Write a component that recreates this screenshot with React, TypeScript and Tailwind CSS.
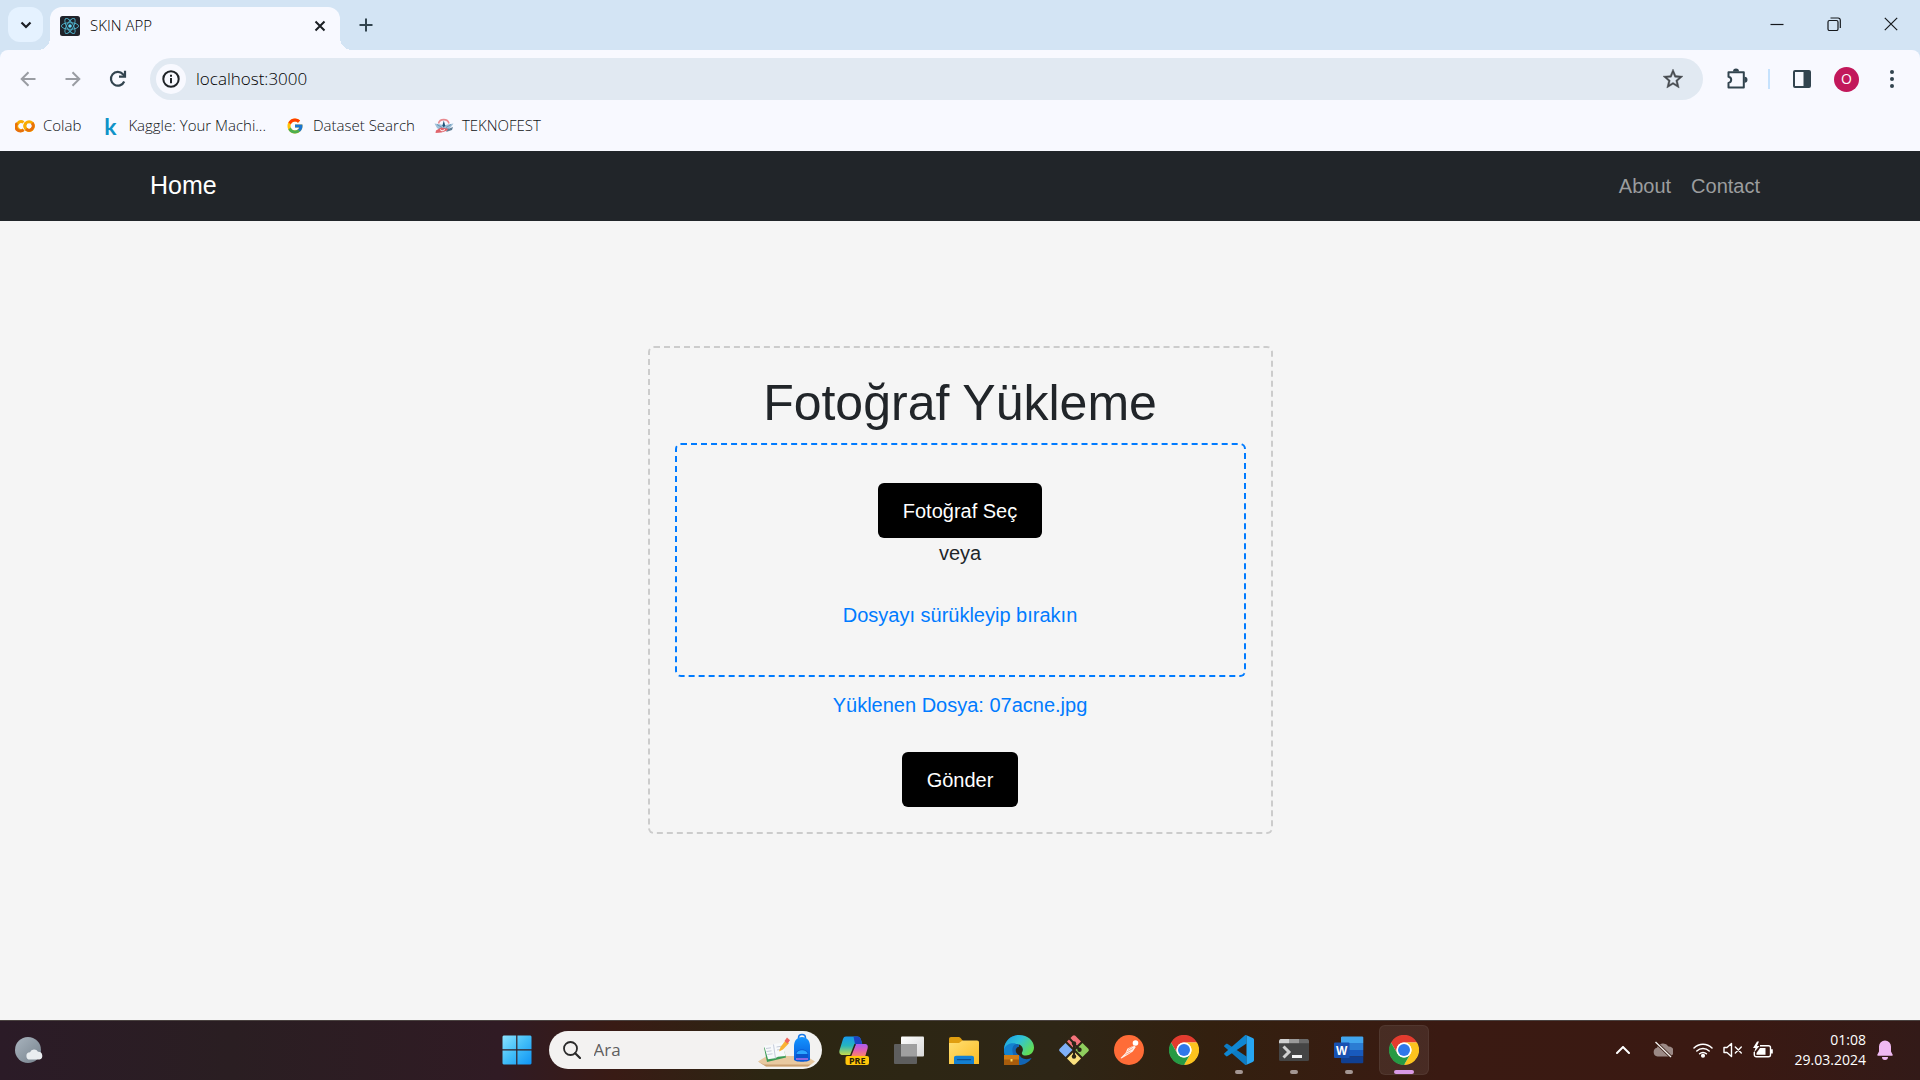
import { useRef, useState } from "react";
import type { ReactNode } from "react";
import { FcGoogle } from "react-icons/fc";

/* ---------- browser icons ---------- */

function ReactLogo() {
  return (
    <svg viewBox="0 0 20 20" className="size-5 shrink-0">
      <rect width="20" height="20" rx="2.5" fill="#20232a" />
      <g fill="none" stroke="#4fb3cc" strokeWidth="0.9">
        <ellipse cx="10" cy="10" rx="8.6" ry="3.3" />
        <ellipse cx="10" cy="10" rx="8.6" ry="3.3" transform="rotate(60 10 10)" />
        <ellipse cx="10" cy="10" rx="8.6" ry="3.3" transform="rotate(120 10 10)" />
      </g>
      <circle cx="10" cy="10" r="1.8" fill="#61dafb" />
    </svg>
  );
}

function ColabLogo() {
  return (
    <svg viewBox="0 0 20 20" className="size-5" fill="none" strokeWidth="2.9">
      <path d="M8.6 6.4A4.4 4.4 0 1 0 8.6 13.8" stroke="#f9ab00" />
      <path d="M2.2 7.2A4.4 4.4 0 0 0 8.6 13.8" stroke="#e8710a" />
      <circle cx="14.1" cy="10.1" r="4.4" stroke="#f9ab00" />
      <path d="M11 7A4.4 4.4 0 0 0 17.2 13.2" stroke="#f9ab00" />
      <path d="M11 13.2A4.4 4.4 0 0 0 17.2 7" stroke="#e8710a" />
    </svg>
  );
}

function KaggleLogo() {
  return <span className="font-['Lato',sans-serif] text-[23px]/[28px] font-bold text-[#0f93c8]">k</span>;
}

function TeknofestLogo() {
  return (
    <svg viewBox="0 0 20 20" className="size-5">
      <path d="M4.500 7.500a5.400 5 0 0 1 10.500 0" fill="none" stroke="#e88a90" strokeWidth="1.600" />
      <path d="M.5 7.500l6.500 1 3 1 3.500-1 6-1-3 4-5 3.500-5-.5-3.500-2.500z" fill="#9fc0d8" />
      <path d="M3 8.500l5 3M17 8.500l-5 3M5 13l10 0" stroke="#6b97b8" strokeWidth="1" />
      <path d="M9.800 4.500l1.400 5-1.400 2-1.400-2z" fill="#1f5278" />
      <path d="M2 14.500l5-3 6 1 3.500 1-9 3-6 .5z" fill="#e0646c" />
      <path d="M6 13.500l2 1.500 3-1.500" fill="none" stroke="#fff" strokeWidth="1" />
      <path d="M14 13l5-2-1 3-6 2z" fill="#5d7c93" />
    </svg>
  );
}

function ArrowIcon({ flip = false }: { flip?: boolean }) {
  return (
    <svg viewBox="0 0 16 16" className={flip ? "size-4 rotate-180" : "size-4"} fill="none" stroke="#9a9da3" strokeWidth="2">
      <path d="M15.500 8H2M8.500 1.200 1.700 8l6.800 6.800" />
    </svg>
  );
}

function ReloadIcon() {
  return (
    <svg viewBox="0 0 18 18" className="size-[18px]" fill="none" stroke="#32444f" strokeWidth="2.200">
      <path d="M15.200 11.500A6.900 6.900 0 1 1 14 4.200l2 2.100" />
      <path d="M16 .8v5.900h-6" />
    </svg>
  );
}

function InfoIcon() {
  return (
    <svg viewBox="0 0 18 18" className="size-[18px]" fill="none" stroke="#1f2328" strokeWidth="2">
      <circle cx="9" cy="9" r="7.700" />
      <path d="M9 8v5.200M9 4.700v2" />
    </svg>
  );
}

function StarIcon() {
  return (
    <svg viewBox="0 0 24 24" className="size-6" fill="#474b50" stroke="#474b50" strokeWidth=".4">
      <path d="m22 9.240-7.190-.62L12 2 9.190 8.630 2 9.240l5.460 4.730L5.820 21 12 17.270 18.180 21l-1.630-7.030L22 9.240zM12 15.400l-3.760 2.270 1-4.280-3.320-2.880 4.380-.38L12 6.100l1.710 4.040 4.380.38-3.320 2.880 1 4.280L12 15.400z" />
    </svg>
  );
}

function PuzzleIcon() {
  return (
    <svg viewBox="0 0 22 22" className="size-[22px]">
      <path d="M2.500 4.200h15.300v15.300H2.500v-4.600c3.600-.6 3.600-5.500 0-6.200z" fill="none" stroke="#32444f" strokeWidth="2" strokeLinejoin="round" />
      <path d="M7 3.500a3 3 0 0 1 6 0zM18.500 8.800a3 3 0 0 1 0 6z" fill="#32444f" />
    </svg>
  );
}

function PanelIcon() {
  return (
    <svg viewBox="0 0 20 20" className="size-5">
      <rect x="2" y="2" width="16" height="16" rx="1" fill="none" stroke="#32444f" strokeWidth="2" />
      <path d="M11.500 2H18v16h-6.500z" fill="#32444f" />
    </svg>
  );
}

/* ---------- taskbar icons ---------- */

function WindowsLogo() {
  return (
    <svg viewBox="0 0 30 30" className="size-[30px]">
      <defs>
        <linearGradient id="win" x1="0" y1="0" x2="1" y2="1">
          <stop offset="0" stopColor="#8be3ff" />
          <stop offset=".5" stopColor="#41bdf8" />
          <stop offset="1" stopColor="#0f94f5" />
        </linearGradient>
      </defs>
      <path d="M1.500.5h12.700v13.700H.5V1.500zM15.400.5h13.100l1 1v12.700H15.400zM.5 15.500h13.700v14H1.500l-1-1zM15.400 15.500h14.100v13l-1 1H15.400z" fill="url(#win)" />
    </svg>
  );
}

function SchoolArt() {
  return (
    <svg viewBox="0 0 58 34" className="h-[34px] w-[58px]">
      <defs>
        <linearGradient id="bag" x1="0" y1="0" x2="0" y2="1">
          <stop offset="0" stopColor="#1394ff" />
          <stop offset="1" stopColor="#0758d8" />
        </linearGradient>
      </defs>
      <path d="M0 28.500 9 23h39l9 5.500-7 5-42 0z" fill="#e8c9a0" />
      <path d="M0 28.500l8 5h42l7-5-4 3H6z" fill="#c99f70" />
      <path d="M6 14.500 24 11l4 13.500-19 4.500z" fill="#3b9b55" />
      <path d="M6 12.500l8-.5 3-1.200 8-1.300 2.300 13.500-7.300.7-3 1.500-7 1z" fill="#f7f9fb" />
      <path d="M15.500 11.500l2 14M8 15.500l5-.7M8.500 18.500l5-.7M9.500 21.500l5-.7M18.500 14l5-.8M19 17l5-.8" stroke="#b8bfd0" strokeWidth=".8" />
      <path d="M21 18.500l1.500-4.500L27.500 7.500l3.500 2.800-6 6.200z" fill="#f9b233" />
      <path d="M26.500 8 29 4.500l3 2.800-2.500 3.500z" fill="#f0645a" />
      <path d="M40.500 5c0-4.600 7-4.600 7 0" fill="none" stroke="#1879e8" strokeWidth="1.500" />
      <path d="M36 13c0-12 16-12 16 0v13.500c0 3-16 3-16 0z" fill="url(#bag)" />
      <path d="M38 21c0-6 12-6 12 0v4c0 2-12 2-12 0z" fill="#0a55cd" />
      <path d="M38.500 21c0-5 11-5 11 0z" fill="#2ca7ff" />
      <path d="M38 26h12" stroke="#b56fea" strokeWidth="1.500" />
    </svg>
  );
}

function CopilotIcon() {
  return (
    <svg viewBox="0 0 30 30" className="size-[30px] overflow-visible">
      <defs>
        <linearGradient id="cpa" x1="0" y1="0" x2="0" y2="1">
          <stop offset="0" stopColor="#1799ee" />
          <stop offset=".5" stopColor="#26b5bd" />
          <stop offset="1" stopColor="#c7dc4b" />
        </linearGradient>
        <linearGradient id="cpb" x1="0" y1="0" x2="0" y2="1">
          <stop offset="0" stopColor="#a85cf4" />
          <stop offset=".5" stopColor="#e35fae" />
          <stop offset="1" stopColor="#ff8a5c" />
        </linearGradient>
      </defs>
      <path d="M7 1.500h11c2.500 0 3.500 1.500 4.200 4l1 3.500h-6L12 20H4C1 20-.2 18 .6 15L4 4C4.600 2.300 5.500 1.500 7 1.500z" fill="url(#cpa)" />
      <path d="M14.500 1.500H18c2.500 0 3.500 1.500 4.200 4l1 3.500H16z" fill="#1d43c4" />
      <path d="M17 9h8.500c3 0 3.800 2 3 4.800L26 22H11z" fill="url(#cpb)" />
      <path d="M16.200 9 11.500 21" stroke="#2b2417" strokeWidth="1.500" />
      <rect x="6.500" y="21" width="23.500" height="9" rx="2" fill="#ffc60a" />
      <text x="18.300" y="28.700" textAnchor="middle" fontFamily="Noto Sans, sans-serif" fontWeight="700" fontSize="9" fill="#2b2106">PRE</text>
    </svg>
  );
}

function TaskViewIcon() {
  return (
    <svg viewBox="0 0 30 30" className="size-[30px]">
      <defs>
        <linearGradient id="tv" x1="0" y1="0" x2="1" y2="1">
          <stop offset="0" stopColor="#fff" />
          <stop offset="1" stopColor="#d8d8d8" />
        </linearGradient>
      </defs>
      <rect x="7" y="1.500" width="23" height="20" rx="1" fill="url(#tv)" />
      <rect x="0" y="9" width="23" height="20" rx="1" fill="#5e5e5e" />
      <path d="M7 9h16v12.500H7z" fill="#a0a0a0" />
    </svg>
  );
}

function FolderIcon() {
  return (
    <svg viewBox="0 0 30 30" className="size-[30px]">
      <defs>
        <linearGradient id="fo" x1="0" y1="0" x2="1" y2="1">
          <stop offset="0" stopColor="#ffdf73" />
          <stop offset="1" stopColor="#fbbc24" />
        </linearGradient>
      </defs>
      <path d="M0 4c0-1.200.7-2 2-2h7.500c1 0 1.600.5 2.500 1.500L14 6v5H0z" fill="#e09e10" />
      <path d="M0 8h10l3.500-2.500H28c1.400 0 2 .7 2 2V29H0z" fill="url(#fo)" />
      <path d="M5 29v-6c0-1.500.8-2.300 2.300-2.300h15.400c1.500 0 2.300.8 2.300 2.300v6z" fill="#1380d3" />
      <path d="M8.500 24.700h13" stroke="#0b4d8f" strokeWidth="1.300" strokeLinecap="round" />
    </svg>
  );
}

function EdgeIcon() {
  return (
    <svg viewBox="0 0 30 30" className="size-[30px]">
      <defs>
        <linearGradient id="ed" x1="0" y1="0" x2="1" y2=".6">
          <stop offset="0" stopColor="#199be4" />
          <stop offset=".5" stopColor="#30c3d8" />
          <stop offset="1" stopColor="#62dd55" />
        </linearGradient>
      </defs>
      <path d="M15 0A15 15 0 0 0 0 15a15 15 0 0 0 15 15c5.500 0 10-2.700 12.600-7-5 2.500-12 1-12.600-5z" fill="#1265b5" />
      <path d="M0 13.500C1 5 8 0 15 0c9 0 15 6 15 12.500 0 5-4 8-8 8-3.500 0-5-1.500-4-3 2.500-4-.5-8.500-5.500-8.500C6 9 .5 12 0 16z" fill="url(#ed)" />
      <path d="M0 14c2-5 7-6.500 12-5.500-4 2-4.500 7-2.500 12H1A14 14 0 0 1 0 14z" fill="#1382d0" />
      <path d="M12 14c2-4 7-2 6 2-1 2-.5 3.500 1.500 4.500H16c-3-1-5-3.500-4-6.500z" fill="#2b2417" />
      <rect x="0" y="20" width="15" height="10" fill="#a85c0c" />
      <path d="M0 20h15v4.500H0z" fill="#d07c14" />
      <path d="M6.500 24h2v2.500h-2z" fill="#ffd65a" />
    </svg>
  );
}

function GitIcon() {
  return (
    <svg viewBox="0 0 30 30" className="size-[30px]">
      <path d="M13.700.8a2 2 0 0 1 2.600 0l5.700 5.700L15 13.500 8 6.500z" fill="#f4737b" />
      <path d="M23.500 8 29.300 13.700a2 2 0 0 1 0 2.600L23.500 22l-7-7z" fill="#8fce5e" />
      <path d="M6.500 8 .7 13.700a2 2 0 0 0 0 2.600L6.500 22l7-7z" fill="#7fb0f8" />
      <path d="M15 16.500 8 23.500l5.700 5.700a2 2 0 0 0 2.600 0l5.700-5.700z" fill="#fbe07e" />
      <g stroke="#2b2417" strokeWidth="2" fill="none">
        <path d="M10.500 3.500 15 8.500v13M15 9l6 6" />
      </g>
      <g fill="#2b2417">
        <circle cx="15" cy="8.500" r="2.200" />
        <circle cx="20.500" cy="14.700" r="2.200" />
        <circle cx="15" cy="21.500" r="2.200" />
      </g>
    </svg>
  );
}

function PostmanIcon() {
  return (
    <svg viewBox="0 0 30 30" className="size-[30px]">
      <circle cx="15" cy="15" r="15" fill="#ff6c37" />
      <circle cx="21.500" cy="8" r="2.800" fill="#fff" />
      <path d="M20 10.500l1.800 1.500-3 4.500-3.800 2.500-7.500 4.500-1-.5 5-5 2-4.500z" fill="#fdeee8" />
      <path d="M14 14.500l6-4M12.500 17l6.500-3.500M11.500 19.500l5-2.500" stroke="#ff9a76" strokeWidth=".8" />
    </svg>
  );
}

function ChromeIcon() {
  return (
    <svg viewBox="0 0 30 30" className="size-[30px]">
      <circle cx="15" cy="15" r="14.500" fill="#fff" />
      <path d="M15 7.500h13A15 15 0 0 0 2 7.500l6.500 11.250A7.500 7.500 0 0 1 15 7.500z" fill="#e33b2e" />
      <path d="M21.500 18.750 15 30A15 15 0 0 0 28 7.500H15a7.500 7.500 0 0 1 6.500 11.250z" fill="#fcc31e" />
      <path d="M8.500 18.750 2 7.500A15 15 0 0 0 15 30l6.500-11.250a7.500 7.500 0 0 1-13 0z" fill="#269a44" />
      <circle cx="15" cy="15" r="7.500" fill="#fff" />
      <circle cx="15" cy="15" r="6" fill="#2f78ea" />
    </svg>
  );
}

function VsCodeIcon() {
  return (
    <svg viewBox="0 0 30 30" className="size-[30px]">
      <path d="M.4 10.500 2 9c.5-.5 1.100-.5 1.700 0L22.500 21.500V30c-.7 0-1.300 0-1.800-.5L.4 11.800c-.5-.4-.5-.9 0-1.300z" fill="#0d7cc4" />
      <path d="M.4 19.500 2 21c.5.500 1.100.5 1.700 0L22.500 8.500V0c-.7 0-1.300 0-1.800.5L.4 18.200c-.5.400-.5.900 0 1.300z" fill="#0f87d2" />
      <path d="M22.500.2 28.700 3c.8.400 1.300 1 1.300 1.900v20.200c0 .9-.5 1.500-1.300 1.900l-6.200 2.800z" fill="#27a6f2" />
    </svg>
  );
}

function TerminalIcon() {
  return (
    <svg viewBox="0 0 30 30" className="size-[30px]">
      <rect y="4" width="30" height="22" rx="1.500" fill="#454545" />
      <path d="M1.500 4H10v4.200H0V5.500z" fill="#d0d0d0" />
      <path d="M10 4h10v4.200H10z" fill="#9a9a9a" />
      <path d="M20 4h8.500L30 5.500v2.700H20z" fill="#6a6a6a" />
      <path d="M4.500 11.500 10 17l-5.500 5.500" fill="none" stroke="#d0d0d0" strokeWidth="3" />
      <path d="M13 20h10v3H13z" fill="#f4f4f4" />
    </svg>
  );
}

function WordIcon() {
  return (
    <svg viewBox="0 0 30 30" className="size-[30px]">
      <path d="M8 1.500h20.500l.8.800V8H7V2.300z" fill="#41a5ee" />
      <path d="M7 8h22.300v7H7z" fill="#2b7cd3" />
      <path d="M7 15h22.300v6.500H7z" fill="#185abd" />
      <path d="M7 21.500h22.300v6l-.8.800H8l-1-.8z" fill="#103f91" />
      <rect x="0" y="7.500" width="15.500" height="15.500" rx="1" fill="#1751b2" />
      <text x="7.700" y="19.500" textAnchor="middle" fontFamily="Liberation Sans, sans-serif" fontWeight="700" fontSize="12" fill="#fff">W</text>
    </svg>
  );
}

function MoonCloudIcon() {
  return (
    <svg viewBox="0 0 30 28" className="h-7 w-[30px]">
      <defs>
        <linearGradient id="mo" x1="0" y1="0" x2="1" y2="1">
          <stop offset="0" stopColor="#a9b4be" />
          <stop offset="1" stopColor="#76828d" />
        </linearGradient>
      </defs>
      <circle cx="13" cy="14" r="13" fill="url(#mo)" />
      <path d="M15 23.500a3.600 3.600 0 0 1 0-7.200 4.500 4.500 0 0 1 8-.6 4 4 0 0 1 1.500 7.800z" fill="#e9edf0" />
    </svg>
  );
}

function CloudOffIcon() {
  return (
    <svg viewBox="0 0 20 18" className="h-[18px] w-5">
      <path d="M4.500 15.500A4.500 4.500 0 0 1 4 6.700 6.500 6.500 0 0 1 15.500 5.500a4.900 4.900 0 0 1 .5 10z" fill="#9b8985" />
      <path d="M2.500 1 18 16" stroke="#35190f" strokeWidth="3" />
      <path d="M2.500 1 18 16" stroke="#f3eeec" strokeWidth="1.400" />
    </svg>
  );
}

function WifiIcon() {
  return (
    <svg viewBox="0 0 20 16" className="h-4 w-5" fill="none" stroke="#fff" strokeWidth="1.500" strokeLinecap="round">
      <path d="M1 6a12.700 12.700 0 0 1 18 0M3.800 9a8.800 8.800 0 0 1 12.400 0M6.600 11.800a4.800 4.800 0 0 1 6.800 0" />
      <circle cx="10" cy="13.800" r="1.300" fill="#fff" />
    </svg>
  );
}

function MuteIcon() {
  return (
    <svg viewBox="0 0 20 16" className="h-4 w-5" fill="none" stroke="#fff" strokeWidth="1.400" strokeLinejoin="round" strokeLinecap="round">
      <path d="M1 5.500h3L8.500 1.500v13L4 10.500H1zM12.300 5l6 6M18.300 5l-6 6" />
    </svg>
  );
}

function BatteryIcon() {
  return (
    <svg viewBox="0 0 20 18" className="h-[18px] w-5">
      <path d="M7 4.800h8.500a2 2 0 0 1 2 2v7a2 2 0 0 1-2 2H3.300a2 2 0 0 1-2-2V11" fill="none" stroke="#fff" strokeWidth="1.400" />
      <path d="M7 7h5.500v6.700H3.500V12z" fill="#fff" />
      <path d="M18 8.200h1.800v4.200H18z" fill="#fff" />
      <path d="M4 .5 0 7h2.500L1 11.500 6.500 5H4l2-4.500z" fill="#fff" />
    </svg>
  );
}

function BellIcon() {
  return (
    <svg viewBox="0 0 18 20" className="h-5 w-[18px]" fill="#efb9f2">
      <path d="M9 .5a6 6 0 0 1 6 6v5l1.700 3.300c.2.500 0 .9-.6.900H1.900c-.6 0-.8-.4-.6-.9L3 11.500v-5a6 6 0 0 1 6-6zM6 17h6a3 3 0 0 1-6 0z" />
    </svg>
  );
}

/* ---------- browser chrome ---------- */

function WindowButton({ label, children }: { label: string; children: ReactNode }) {
  return (
    <button aria-label={label} className="flex h-10 w-[57px] items-center justify-center">
      <svg viewBox="0 0 14 14" className="size-3.5" fill="none" stroke="#15181c" strokeWidth="1.200">
        {children}
      </svg>
    </button>
  );
}

function TabStrip() {
  return (
    <div className="flex h-[50px] items-end bg-[#d3e4f4]">
      <button aria-label="Search tabs" className="mb-2 ml-2 flex size-[35px] items-center justify-center rounded-xl bg-[#e5f2ff]">
        <svg viewBox="0 0 12 12" className="size-3" fill="none" stroke="#1b1f24" strokeWidth="2.200">
          <path d="M1.500 3.500 6 8l4.500-4.500" />
        </svg>
      </button>
      <div className="relative ml-[7px] flex h-[43px] w-[290px] items-center rounded-t-xl bg-[#f8f9ff] pr-3 pb-1.5 pl-2.5">
        <span className="absolute bottom-0 -left-3 size-3 bg-[radial-gradient(circle_at_0_0,transparent_12px,#f8f9ff_12px)]" />
        <span className="absolute -right-3 bottom-0 size-3 bg-[radial-gradient(circle_at_100%_0,transparent_12px,#f8f9ff_12px)]" />
        <ReactLogo />
        <span className="ml-2.5 flex-1 text-[15px] font-light text-black">SKIN APP</span>
        <button aria-label="Close tab" className="flex size-4 items-center justify-center">
          <svg viewBox="0 0 12 12" className="size-3" fill="none" stroke="#1b1f24" strokeWidth="2">
            <path d="M1.500 1.500l9 9M10.500 1.500l-9 9" />
          </svg>
        </button>
      </div>
      <button aria-label="New tab" className="mb-2 ml-2 flex size-[35px] items-center justify-center">
        <svg viewBox="0 0 14 14" className="size-3.5" stroke="#32444f" strokeWidth="2">
          <path d="M7 .5v13M.5 7h13" />
        </svg>
      </button>
      <div className="ml-auto flex self-start pt-1 pr-px">
        <WindowButton label="Minimize">
          <path d="M.5 7.500h13" />
        </WindowButton>
        <WindowButton label="Restore">
          <rect x="1" y="3.500" width="10" height="10" rx="1.500" />
          <path d="M3.500 1h7.500a2.300 2.300 0 0 1 2.300 2.300V11" />
        </WindowButton>
        <WindowButton label="Close">
          <path d="M.8.8l12.400 12.400M13.200.8.8 13.200" />
        </WindowButton>
      </div>
    </div>
  );
}

function ToolButton({ label, children }: { label: string; children: ReactNode }) {
  return (
    <button aria-label={label} className="flex size-[35px] shrink-0 items-center justify-center">
      {children}
    </button>
  );
}

function Toolbar() {
  return (
    <div className="bg-[#d3e4f4]">
      <div className="flex items-center rounded-t-lg bg-[#f8f9ff] pt-2 pr-[11px] pl-2.5">
        <div className="flex gap-2.5">
          <ToolButton label="Back">
            <ArrowIcon />
          </ToolButton>
          <ToolButton label="Forward">
            <ArrowIcon flip />
          </ToolButton>
          <ToolButton label="Reload">
            <ReloadIcon />
          </ToolButton>
        </div>
        <div className="mr-4 ml-[15px] flex h-[42px] flex-1 items-center rounded-full bg-[#e1e9f2] pr-[18px] pl-1.5">
          <button aria-label="Site information" className="flex size-[30px] items-center justify-center rounded-full bg-[#f8f9ff]">
            <InfoIcon />
          </button>
          <input
            aria-label="Address"
            defaultValue="localhost:3000"
            className="ml-2.5 min-w-0 flex-1 bg-transparent text-[17px] font-light text-black outline-none"
          />
          <button aria-label="Bookmark this page">
            <StarIcon />
          </button>
        </div>
        <ToolButton label="Extensions">
          <PuzzleIcon />
        </ToolButton>
        <span className="mx-3.5 h-5 w-0.5 bg-[#c6e2fd]" />
        <div className="flex gap-2.5">
          <ToolButton label="Side panel">
            <PanelIcon />
          </ToolButton>
          <ToolButton label="Profile">
            <span className="flex size-[25px] items-center justify-center rounded-full bg-[#c2185b] text-sm text-white">O</span>
          </ToolButton>
          <ToolButton label="Menu">
            <svg viewBox="0 0 4 18" className="h-[18px] w-1" fill="#32444f">
              <circle cx="2" cy="2" r="2" />
              <circle cx="2" cy="9" r="2" />
              <circle cx="2" cy="16" r="2" />
            </svg>
          </ToolButton>
        </div>
      </div>
    </div>
  );
}

function Bookmark({ icon, children }: { icon: ReactNode; children: ReactNode }) {
  return (
    <a href="#" className="flex items-center gap-2">
      <span className="flex w-5 items-center justify-center">{icon}</span>
      {children}
    </a>
  );
}

function BookmarksBar() {
  return (
    <nav aria-label="Bookmarks" className="flex h-[51px] items-center gap-[19px] bg-[#f8f9ff] pl-[15px] text-[15px] font-light text-[#0f1215]">
      <Bookmark icon={<ColabLogo />}>Colab</Bookmark>
      <Bookmark icon={<KaggleLogo />}>Kaggle: Your Machi...</Bookmark>
      <Bookmark icon={<FcGoogle className="size-[18px]" />}>Dataset Search</Bookmark>
      <Bookmark icon={<TeknofestLogo />}>TEKNOFEST</Bookmark>
    </nav>
  );
}

/* ---------- page ---------- */

function SiteNav() {
  return (
    <nav className="bg-[#212529]">
      <div className="mx-auto flex h-[70px] max-w-[1650px] items-center justify-between px-[15px]">
        <a href="#" className="text-[25px] text-white">
          Home
        </a>
        <div className="flex gap-5 pr-2.5 text-xl text-[#9b9d9e]">
          <a href="#">About</a>
          <a href="#">Contact</a>
        </div>
      </div>
    </nav>
  );
}

function UploadCard() {
  const picker = useRef<HTMLInputElement>(null);
  const [fileName, setFileName] = useState("07acne.jpg");
  return (
    <form
      onSubmit={(e) => e.preventDefault()}
      className="mx-auto w-full max-w-[625px] rounded-md border-2 border-dashed border-[#ccc] p-[25px] text-center text-xl/[30px] text-[#212529]"
    >
      <h1 className="mb-2.5 text-[50px]/[60px]">Fotoğraf Yükleme</h1>
      <div
        onDragOver={(e) => e.preventDefault()}
        onDrop={(e) => {
          e.preventDefault();
          setFileName(e.dataTransfer.files[0]?.name ?? fileName);
        }}
        className="rounded-md border-2 border-dashed border-[#007bff] px-[38px] pt-[38px] pb-[45px]"
      >
        <input
          ref={picker}
          type="file"
          aria-label="Fotoğraf"
          className="hidden"
          onChange={(e) => setFileName(e.target.files?.[0]?.name ?? fileName)}
        />
        <button type="button" onClick={() => picker.current?.click()} className="h-[55px] rounded-md bg-black px-[25px] text-white">
          Fotoğraf Seç
        </button>
        <p>veya</p>
        <p className="mt-8 text-[#007bff]">Dosyayı sürükleyip bırakın</p>
      </div>
      <p className="mt-[13px] text-[#007bff]">Yüklenen Dosya: {fileName}</p>
      <button type="submit" className="mt-8 h-[55px] rounded-md bg-black px-[25px] text-white">
        Gönder
      </button>
    </form>
  );
}

/* ---------- taskbar ---------- */

function AppButton({ label, state = "closed", children }: { label: string; state?: "closed" | "open" | "active"; children: ReactNode }) {
  return (
    <button
      aria-label={label}
      className={
        state === "active"
          ? "relative flex size-[50px] items-center justify-center rounded-md bg-white/8 inset-ring inset-ring-white/5"
          : "relative flex size-[50px] items-center justify-center"
      }
    >
      {children}
      {state === "open" && <span className="absolute bottom-px h-1 w-2 rounded-full bg-[#a39693]" />}
      {state === "active" && <span className="absolute bottom-px h-1 w-5 rounded-full bg-[#d99ae6]" />}
    </button>
  );
}

function Taskbar() {
  return (
    <footer className="grid h-[60px] grid-cols-[1fr_auto_1fr] items-center bg-[linear-gradient(90deg,#2b1b27_0%,#2a1e22_12%,#301b24_26%,#391b15_32%,#2c2612_40%,#2e2616_55%,#33200f_63%,#3a1a12_75%,#3a1912_90%,#331a18_100%)] shadow-[inset_0_1px_#4a4240]">
      <button aria-label="Weather" className="ml-[15px] justify-self-start">
        <MoonCloudIcon />
      </button>
      <div className="flex items-center gap-[7px]">
        <AppButton label="Start">
          <WindowsLogo />
        </AppButton>
        <label className="flex h-[38px] w-[273px] items-center rounded-full bg-[#f3f2f1] pr-1.5 pl-3.5">
          <svg viewBox="0 0 18 18" className="size-[18px] shrink-0" fill="none" stroke="#2a2a2a" strokeWidth="1.800">
            <circle cx="7.500" cy="7.500" r="6.500" />
            <path d="M12.200 12.200 17 17" strokeWidth="2.200" strokeLinecap="round" />
          </svg>
          <input aria-label="Ara" placeholder="Ara" className="ml-[13px] min-w-0 flex-1 bg-transparent text-[17px] outline-none placeholder:text-[#5f5f5f]" />
          <SchoolArt />
        </label>
        <div className="flex gap-[5px]">
          <AppButton label="Copilot">
            <CopilotIcon />
          </AppButton>
          <AppButton label="Task view">
            <TaskViewIcon />
          </AppButton>
          <AppButton label="File Explorer">
            <FolderIcon />
          </AppButton>
          <AppButton label="Edge">
            <EdgeIcon />
          </AppButton>
          <AppButton label="Git">
            <GitIcon />
          </AppButton>
          <AppButton label="Postman">
            <PostmanIcon />
          </AppButton>
          <AppButton label="Chrome">
            <ChromeIcon />
          </AppButton>
          <AppButton label="Visual Studio Code" state="open">
            <VsCodeIcon />
          </AppButton>
          <AppButton label="Terminal" state="open">
            <TerminalIcon />
          </AppButton>
          <AppButton label="Word" state="open">
            <WordIcon />
          </AppButton>
          <AppButton label="Chrome window" state="active">
            <ChromeIcon />
          </AppButton>
        </div>
      </div>
      <div className="mr-[26px] flex items-center justify-self-end text-white">
        <button aria-label="Hidden icons" className="mr-[23px]">
          <svg viewBox="0 0 14 8" className="h-2 w-3.5" fill="none" stroke="#fff" strokeWidth="2" strokeLinecap="round">
            <path d="M1 7l6-6 6 6" />
          </svg>
        </button>
        <button aria-label="OneDrive" className="mr-5">
          <CloudOffIcon />
        </button>
        <button aria-label="Quick settings" className="mr-[11px] flex items-center gap-2.5">
          <WifiIcon />
          <MuteIcon />
          <BatteryIcon />
        </button>
        <button aria-label="Clock" className="w-[82px] text-right text-sm/5">
          01:08
          <br />
          29.03.2024
        </button>
        <button aria-label="Notifications" className="ml-2.5">
          <BellIcon />
        </button>
      </div>
    </footer>
  );
}

export default function App() {
  return (
    <div className="flex min-h-screen flex-col bg-[#f5f5f5] font-['Open_Sans','Noto_Sans',sans-serif]">
      <header>
        <TabStrip />
        <Toolbar />
        <BookmarksBar />
      </header>
      <main className="flex-1 font-['Liberation_Sans',Arial,sans-serif]">
        <SiteNav />
        <div className="pt-[125px] pb-10">
          <UploadCard />
        </div>
      </main>
      <Taskbar />
    </div>
  );
}
